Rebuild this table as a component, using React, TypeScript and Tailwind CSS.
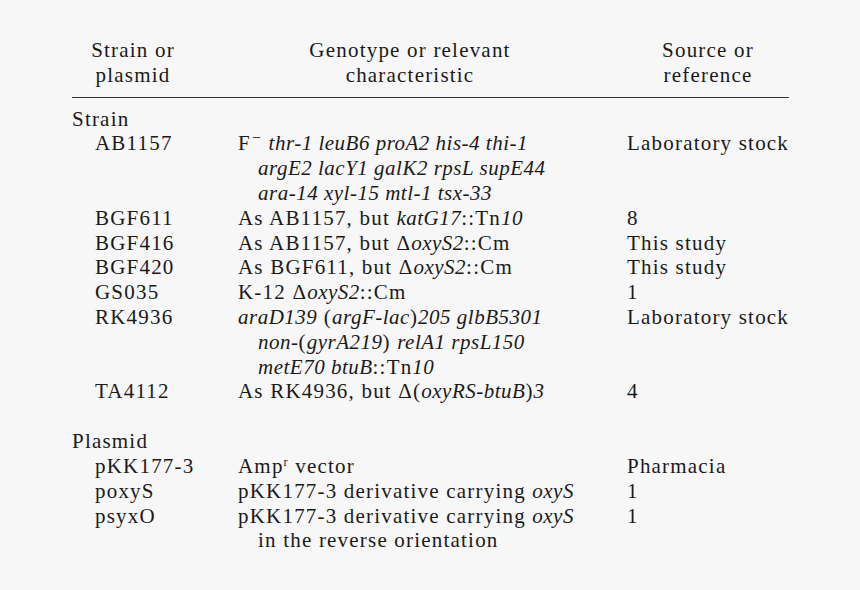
import React from "react";

const I = ({ children }: { children: React.ReactNode }) => <i className="tracking-[0.5px]">{children}</i>;

type Row = { name: string; lines: React.ReactNode[]; src: string };

const strains: Row[] = [
  {
    name: "AB1157",
    lines: [
      <>
        F<span className="relative -top-[7px] text-[16px] leading-[0] ml-[1px]">−</span> <I>thr-1 leuB6 proA2 his-4 thi-1</I>
      </>,
      <I>argE2 lacY1 galK2 rpsL supE44</I>,
      <I>ara-14 xyl-15 mtl-1 tsx-33</I>,
    ],
    src: "Laboratory stock",
  },
  {
    name: "BGF611",
    lines: [
      <>
        As AB1157, but <I>katG17</I>::Tn<I>10</I>
      </>,
    ],
    src: "8",
  },
  {
    name: "BGF416",
    lines: [
      <>
        As AB1157, but Δ<I>oxyS2</I>::Cm
      </>,
    ],
    src: "This study",
  },
  {
    name: "BGF420",
    lines: [
      <>
        As BGF611, but Δ<I>oxyS2</I>::Cm
      </>,
    ],
    src: "This study",
  },
  {
    name: "GS035",
    lines: [
      <>
        K-12 Δ<I>oxyS2</I>::Cm
      </>,
    ],
    src: "1",
  },
  {
    name: "RK4936",
    lines: [
      <>
        <I>araD139</I> (<I>argF-lac</I>)<I>205 glbB5301</I>
      </>,
      <>
        <I>non-</I>(<I>gyrA219</I>) <I>relA1 rpsL150</I>
      </>,
      <>
        <I>metE70 btuB</I>::Tn<I>10</I>
      </>,
    ],
    src: "Laboratory stock",
  },
  {
    name: "TA4112",
    lines: [
      <>
        As RK4936, but Δ(<I>oxyRS-btuB</I>)<I>3</I>
      </>,
    ],
    src: "4",
  },
];

const plasmids: Row[] = [
  {
    name: "pKK177-3",
    lines: [
      <>
        Amp<span className="relative -top-[7px] text-[12px] leading-[0]">r</span> vector
      </>,
    ],
    src: "Pharmacia",
  },
  {
    name: "poxyS",
    lines: [
      <>
        pKK177-3 derivative carrying <I>oxyS</I>
      </>,
    ],
    src: "1",
  },
  {
    name: "psyxO",
    lines: [
      <>
        pKK177-3 derivative carrying <I>oxyS</I>
      </>,
      <>in the reverse orientation</>,
    ],
    src: "1",
  },
];

function DataRow({ r }: { r: Row }) {
  return (
    <div className="grid grid-cols-[166px_389px_162px]">
      <div className="pl-[23px]">{r.name}</div>
      <div>
        {r.lines.map((l, i) => (
          <div key={i} className={i > 0 ? "pl-[20px] h-[24.8px]" : "h-[24.8px]"}>
            {l}
          </div>
        ))}
      </div>
      <div className="whitespace-nowrap">{r.src}</div>
    </div>
  );
}

export default function App() {
  return (
    <div className="w-[860px] h-[590px] bg-[#f7f7f7] text-[#1a1a1a] text-[21px] leading-[24.8px] tracking-[1.2px] pl-[72px] pt-[38px] font-['Liberation_Serif','DejaVu_Serif',serif]">
      <div className="w-[717px]">
        <div className="flex pb-[9px] border-b-[1.5px] border-[#333]">
          <div className="w-[122px] text-center">
            <div>Strain or</div>
            <div>plasmid</div>
          </div>
          <div className="ml-[44px] w-[344px] text-center">
            <div>Genotype or relevant</div>
            <div>characteristic</div>
          </div>
          <div className="ml-[45px] w-[162px] text-center">
            <div>Source or</div>
            <div>reference</div>
          </div>
        </div>
        <div className="pt-[9px]">
          <div>Strain</div>
          {strains.map((r) => (
            <DataRow key={r.name} r={r} />
          ))}
          <div className="h-[25px]" />
          <div>Plasmid</div>
          {plasmids.map((r) => (
            <DataRow key={r.name} r={r} />
          ))}
        </div>
      </div>
    </div>
  );
}
